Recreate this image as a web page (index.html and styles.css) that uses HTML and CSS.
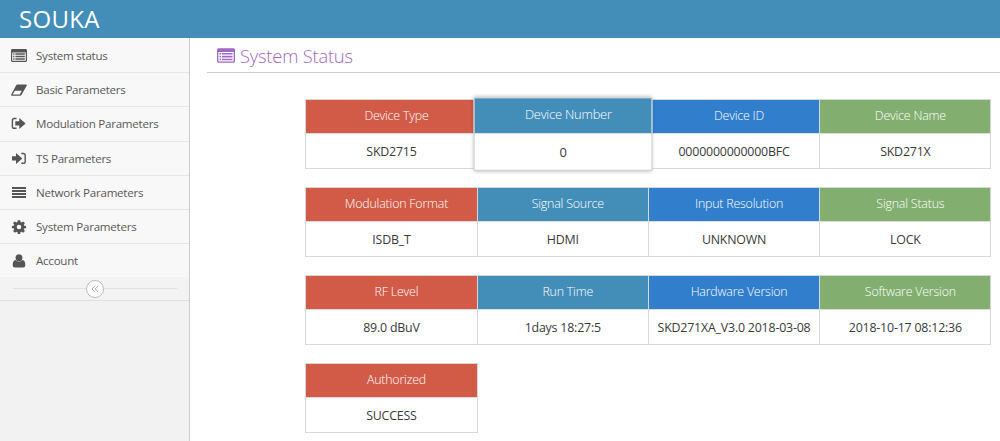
FILE: index.html
```html
<!doctype html>
<html lang="en">
<head>
    <meta charset="UTF-8">
    <meta name="viewport" content="width=device-width, initial-scale=1.0">
    <title>SOUKA</title>
    <link rel="stylesheet" href="styles.css">
</head>
<body>
    <!-- icon shared by the menu and the page title -->
    <svg class="sprite">
        <symbol id="icon-list" viewBox="0 0 16 13">
            <path fill-rule="evenodd" d="M1.400 0h13.200A1.400 1.400 0 0 1 16 1.400v10.200a1.400 1.400 0 0 1-1.400 1.400H1.400A1.400 1.400 0 0 1 0 11.600V1.400A1.400 1.400 0 0 1 1.400 0zM1.200 3.400v8q0 .4.400.4h12.800q.4 0 .4-.4v-8z"/>
            <path d="M2.200 4.300h1.300v1.400H2.200zM4.400 4.300h9.400v1.400H4.400zM2.200 6.800h1.300v1.400H2.200zM4.400 6.800h9.400v1.400H4.400zM2.200 9.300h1.300v1.400H2.200zM4.400 9.300h9.400v1.400H4.400z"/>
        </symbol>
    </svg>
    <div class="navbar">SOUKA</div>
    <div class="main">
        <div class="sidebar">
            <ul class="menu">
                <li><svg width="16" height="13"><use href="#icon-list"/></svg><span>System status</span></li>
                <li><svg width="16" height="12" viewBox="0 0 16 12"><path fill-rule="evenodd" d="M6.300.5h8.700q1.100.1.700 1.200L10.400 10.900q-.5.800-1.300.8H.9q-1.100-.1-.7-1.200L5.200 1.200Q5.600.5 6.300.5zM3.800 6.700L1.700 10.500h7l2.100-3.800z"/></svg><span>Basic Parameters</span></li>
                <li><svg width="16" height="13" viewBox="0 0 16 13"><path class="line" d="M5.500 1.500H3.300Q1.400 1.500 1.400 3.400v6Q1.400 11.300 3.300 11.300h2.200"/><path d="M4.300 4.300h4V.9L14.600 6.400 8.300 12V8.600h-4z"/></svg><span>Modulation Parameters</span></li>
                <li><svg width="16" height="13" viewBox="0 0 16 13"><path class="line" d="M10.300 1.500h2q1.900 0 1.900 1.900v6q0 1.900-1.900 1.900h-2"/><path d="M1 4.300h4V.9L11.300 6.400 5 12V8.600H1z"/></svg><span>TS Parameters</span></li>
                <li><svg width="16" height="13" viewBox="0 0 16 13"><path d="M1 1h14v2H1zM1 4h14v2H1zM1 7h14v2H1zM1 10h14v2H1z"/></svg><span>Network Parameters</span></li>
                <li><svg width="16" height="14" viewBox="-8 -7 16 14"><path fill-rule="evenodd" d="M-1.200-6.800h2.400l.4 1.900 1 .4 1.600-1.100 1.700 1.700-1.100 1.600.4 1 1.900.4v2l-1.900.4-.4 1 1.100 1.600-1.700 1.700-1.600-1.100-1 .4-.4 1.900h-2.400l-.4-1.900-1-.4-1.600 1.100-1.700-1.700 1.100-1.600-.4-1-1.900-.4v-2l1.900-.4.4-1-1.100-1.600 1.700-1.700 1.600 1.100 1-.4zM0-2.300a2.300 2.300 0 1 0 0 4.600 2.300 2.300 0 1 0 0-4.600z"/></svg><span>System Parameters</span></li>
                <li><svg width="16" height="14" viewBox="0 0 16 14"><ellipse cx="8" cy="3.800" rx="3.400" ry="3.600"/><path d="M4.400 6.100Q8 9.200 11.600 6.100q2.700.7 2.700 4.900 0 2.600-2.100 2.600H3.800q-2.100 0-2.100-2.600 0-4.200 2.700-4.900z"/></svg><span>Account</span></li>
            </ul>
            <div class="toggle">
                <div class="circle"><svg width="8" height="8" viewBox="0 0 8 8"><path d="M4 .8L1 4l3 3.200M7.200.8l-3 3.200 3 3.200"/></svg></div>
            </div>
        </div>
        <div class="content">
            <h1 class="title"><svg width="18" height="15"><use href="#icon-list"/></svg>System Status</h1>
            <div class="cards">
                <div class="card red"><h2>Device Type</h2><p>SKD2715</p></div>
                <div class="card cyan active"><h2>Device Number</h2><p>0</p></div>
                <div class="card blue"><h2>Device ID</h2><p>0000000000000BFC</p></div>
                <div class="card green"><h2>Device Name</h2><p>SKD271X</p></div>
                <div class="card red"><h2>Modulation Format</h2><p>ISDB_T</p></div>
                <div class="card cyan"><h2>Signal Source</h2><p>HDMI</p></div>
                <div class="card blue"><h2>Input Resolution</h2><p>UNKNOWN</p></div>
                <div class="card green"><h2>Signal Status</h2><p>LOCK</p></div>
                <div class="card red"><h2>RF Level</h2><p>89.0 dBuV</p></div>
                <div class="card cyan"><h2>Run Time</h2><p>1days 18:27:5</p></div>
                <div class="card blue"><h2>Hardware Version</h2><p>SKD271XA_V3.0 2018-03-08</p></div>
                <div class="card green"><h2>Software Version</h2><p>2018-10-17 08:12:36</p></div>
                <div class="card red"><h2>Authorized</h2><p>SUCCESS</p></div>
            </div>
        </div>
    </div>
</body>
</html>
```
FILE: styles.css
```css
*{padding: 0;margin: 0;box-sizing: border-box}
body{
    height: 441px;
    overflow: hidden;
    font-family: "Open Sans", "Noto Sans", sans-serif;
    background-color: #fff;
}
.sprite{display: none}
.navbar{
    height: 38px;
    padding-left: 19px;
    line-height: 37px;
    font-size: 24px;
    letter-spacing: .3px;
    color: #fff;
    background-color: #438eb9;
}
.main{
    display: flex;
    height: 403px;
}
.sidebar{
    width: 190px;
    flex: none;
    border-right: 1px solid #ccc;
    background-color: #f2f2f2;
}
.menu{list-style: none}
.menu li{
    display: flex;
    align-items: center;
    height: 34.2px;
    padding-left: 11px;
    border-top: 1px solid #e5e5e5;
    background-color: #f8f8f8;
    font-size: 11.6px;
    letter-spacing: -.26px;
    color: #585858;
}
.menu li:first-child{border-top-color: #f8f8f8}
.menu svg{
    margin-right: 9px;
    fill: #555;
}
.menu .line{
    fill: none;
    stroke: #555;
    stroke-width: 1.4;
}
.toggle{
    display: flex;
    align-items: center;
    justify-content: center;
    height: 24px;
    border-bottom: 1px solid #e0e0e0;
    background-color: #f3f3f3;
}
.toggle:before,
.toggle:after{
    content: '';
    width: 73px;
    height: 1px;
    background-color: #e0e0e0;
}
.circle{
    display: flex;
    align-items: center;
    justify-content: center;
    width: 18px;
    height: 18px;
    border: 1px solid #bbb;
    border-radius: 50%;
    background-color: #fff;
}
.circle path{
    fill: none;
    stroke: #aaa;
    stroke-width: 1;
}
.content{
    flex: 1;
    padding-left: 17px;
}
.title{
    display: flex;
    align-items: center;
    height: 35px;
    padding: 1px 0 0 10px;
    border-bottom: 1px solid #ccc;
    font-size: 18.3px;
    font-weight: 300;
    letter-spacing: -.18px;
    color: #a069c3;
}
.title svg{
    margin-right: 5px;
    fill: #a069c3;
}
.cards{
    display: grid;
    grid-template-columns: repeat(4, 171.3px);
    row-gap: 18px;
    padding: 26px 0 0 98.3px;
}
.card{
    height: 70px;
    margin-right: -1px;
    border: 1px solid #d8d8d8;
    background-color: #fff;
    text-align: center;
}
.card h2{
    height: 34px;
    padding-left: 10px;
    border-bottom: 1px solid #ddd;
    line-height: 31px;
    font-size: 12.4px;
    font-weight: 300;
    letter-spacing: -.2px;
    color: #fff;
}
.card p{
    line-height: 35px;
    font-size: 12.4px;
    letter-spacing: -.2px;
    color: #393939;
}
.red h2{background-color: #d15b47}
.cyan h2{background-color: #438eb9}
.blue h2{background-color: #317ecc}
.green h2{background-color: #82af6f}
.active{
    z-index: 1;
    transform: scale(1.04, 1.05);
    border-color: #ccc;
    box-shadow: 0 0 4px rgba(0, 0, 0, .35);
}
```
